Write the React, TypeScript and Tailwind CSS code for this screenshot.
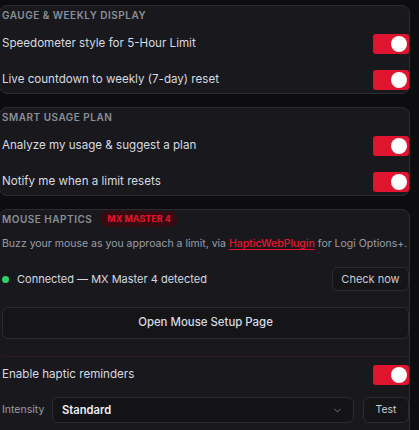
import { ChevronDown } from "lucide-react";

// ── Small pieces ──────────────────────────────────────────────────────────────
function Toggle() {
  return (
    <span className="shrink-0 flex items-center justify-end w-[36px] h-[20px] rounded-[3px] bg-[#e0142f] pr-[2px]">
      <span className="size-[16px] rounded-full bg-white" />
    </span>
  );
}

function SectionTitle({ children }: { children: React.ReactNode }) {
  return (
    <p className="h-4 flex items-center text-[10px] font-semibold uppercase tracking-[0.05em] text-[#8a8e98]">
      {children}
    </p>
  );
}

function ToggleRow({ label }: { label: string }) {
  return (
    <div className="h-5 flex items-center justify-between">
      <span className="text-[11.6px] text-[#d6d9e0]">{label}</span>
      <Toggle />
    </div>
  );
}

const CARD = "-ml-px w-[411px] rounded-lg border border-[#2b2b31] bg-[#19191d] pl-[2px] pt-px";

export default function App() {
  return (
    <div
      className="min-h-[430px] w-[419px] overflow-hidden bg-[#0d0d0f] pt-[5px]"
      style={{ fontFamily: "Inter, 'Noto Sans', sans-serif" }}
    >
      {/* Gauge & weekly */}
      <section className={`${CARD} pb-[3px]`}>
        <SectionTitle>Gauge &amp; Weekly Display</SectionTitle>
        <div className="mt-[11px] flex flex-col gap-4">
          <ToggleRow label="Speedometer style for 5-Hour Limit" />
          <ToggleRow label="Live countdown to weekly (7-day) reset" />
        </div>
      </section>

      {/* Smart usage plan */}
      <section className={`${CARD} mt-[13px] pb-[3px]`}>
        <SectionTitle>Smart Usage Plan</SectionTitle>
        <div className="mt-[11px] flex flex-col gap-4">
          <ToggleRow label="Analyze my usage & suggest a plan" />
          <ToggleRow label="Notify me when a limit resets" />
        </div>
      </section>

      {/* Mouse haptics */}
      <section className={`${CARD} mt-[13px] pb-4`}>
        <div className="flex items-center gap-2">
          <SectionTitle>Mouse Haptics</SectionTitle>
          <span className="h-4 flex items-center rounded-full bg-[#360c12] px-[7px] text-[9px] font-bold text-[#e8112d]">
            MX MASTER 4
          </span>
        </div>

        <p className="mt-[9px] text-[10.5px] leading-4 text-[#9a9ea8] whitespace-nowrap">
          Buzz your mouse as you approach a limit, via{" "}
          <span className="font-medium text-[#e8112d] underline underline-offset-2">HapticWebPlugin</span> for Logi
          Options+.
        </p>

        <div className="mt-[15px] flex items-center justify-between">
          <div className="flex items-center gap-2">
            <span className="size-[7px] rounded-full bg-[#2fd06a]" />
            <span className="text-[11px] text-[#d6d9e0]">Connected — MX Master 4 detected</span>
          </div>
          <button className="h-6 w-[77px] rounded-md border border-[#2b2b31] bg-[#151518] text-[11px] text-[#c9ccd4]">
            Check now
          </button>
        </div>

        <button className="mt-4 h-8 w-full rounded-md border border-[#2b2b31] bg-[#151518] text-[11.4px] font-medium text-[#d6d9e0]">
          Open Mouse Setup Page
        </button>

        <div className="mt-[17px] h-px bg-[#2f1b1f]" />

        <div className="mt-2 flex flex-col gap-3">
          <ToggleRow label="Enable haptic reminders" />
          <div className="flex items-center gap-[9px]">
            <span className="w-[41px] text-[10.5px] text-[#9a9ea8]">Intensity</span>
            <div className="flex h-[26px] w-[302px] items-center justify-between rounded-md border border-[#2b2b31] bg-[#141417] pl-[9px] pr-[10px]">
              <span className="text-[11.2px] font-semibold text-[#eef0f4]">Standard</span>
              <ChevronDown className="size-[11px] text-[#7d818b]" strokeWidth={2} />
            </div>
            <button className="h-[26px] w-[46px] rounded-md border border-[#2b2b31] bg-[#151518] text-[10.5px] text-[#c9ccd4]">
              Test
            </button>
          </div>
        </div>
      </section>
    </div>
  );
}
